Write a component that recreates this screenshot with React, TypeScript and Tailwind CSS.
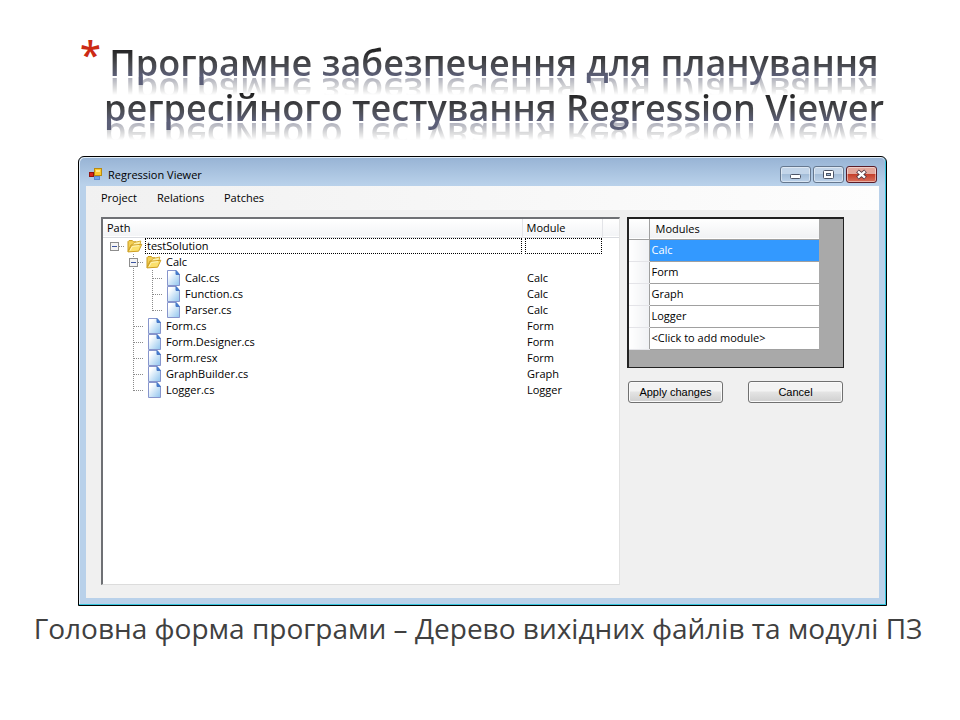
import type { ReactNode } from "react";

type Node = { name: string; module?: string; level: number; kind: "folder" | "file"; last?: boolean };

const nodes: Node[] = [
  { name: "testSolution", level: 0, kind: "folder", last: true },
  { name: "Calc", level: 1, kind: "folder" },
  { name: "Calc.cs", module: "Calc", level: 2, kind: "file" },
  { name: "Function.cs", module: "Calc", level: 2, kind: "file" },
  { name: "Parser.cs", module: "Calc", level: 2, kind: "file", last: true },
  { name: "Form.cs", module: "Form", level: 1, kind: "file" },
  { name: "Form.Designer.cs", module: "Form", level: 1, kind: "file" },
  { name: "Form.resx", module: "Form", level: 1, kind: "file" },
  { name: "GraphBuilder.cs", module: "Graph", level: 1, kind: "file" },
  { name: "Logger.cs", module: "Logger", level: 1, kind: "file", last: true },
];

const modules = ["Calc", "Form", "Graph", "Logger", "<Click to add module>"];

function Guide({ kind }: { kind: "blank" | "line" | "tee" | "end" | "root" | "box" }) {
  const dots = { stroke: "#8a8a8a", strokeDasharray: "1 1" };
  return (
    <svg width="19" height="16" className="shrink-0" shapeRendering="crispEdges" aria-hidden="true">
      {(kind === "line" || kind === "tee" || kind === "box") && <path d="M9.5 0V16" {...dots} />}
      {kind === "end" && <path d="M9.5 0V9" {...dots} />}
      {kind !== "blank" && kind !== "line" && <path d="M10 8.5H19" {...dots} />}
      {(kind === "root" || kind === "box") && (
        <g>
          <rect x="5.5" y="4.5" width="8" height="8" rx="1" fill="#f4f4f4" stroke="#8d8d8d" />
          <path d="M7 8.5H12" stroke="#3c55a0" />
        </g>
      )}
    </svg>
  );
}

function FolderIcon() {
  return (
    <svg width="16" height="16" viewBox="0 0 16 16" className="ml-[3px] shrink-0" aria-hidden="true">
      <path d="M1 13.5V3.6L2 2.6H5.4L6.6 3.8H9V7H4Z" fill="#f3cf55" stroke="#c99a1c" />
      <path d="M5.5 6.5L7 4.5L13.8 3L12.8 7.5" fill="#fdf0a8" stroke="#d8ae35" />
      <path d="M1 13.9L4.6 7.3L14.8 6.3L11.6 13.2Z" fill="#fbe06c" stroke="#cf9f22" />
      <path d="M3 12.6L5.3 8.4L12 7.7" fill="none" stroke="#fff6c0" />
    </svg>
  );
}

function FileIcon() {
  return (
    <svg width="14" height="16" viewBox="0 0 14 16" className="ml-[5px] shrink-0" aria-hidden="true">
      <defs>
        <linearGradient id="sheet" x1="0" y1="0" x2="1" y2="1">
          <stop offset="0.2" stopColor="#ffffff" />
          <stop offset="1" stopColor="#8fc4ee" />
        </linearGradient>
      </defs>
      <path d="M0.5 0.5H9L12.5 4.5V15.5H0.5Z" fill="url(#sheet)" stroke="#8795cc" />
      <path d="M9 0.5V4.5H12.5Z" fill="#3f7fd6" stroke="#4b78c4" />
    </svg>
  );
}

function FormIcon() {
  return (
    <svg width="14" height="14" viewBox="0 0 14 14" className="mt-1.5 shrink-0" aria-hidden="true">
      <rect x="5.5" y="0.5" width="7" height="7" fill="#fbc92f" stroke="#b88a12" />
      <path d="M7 2H11V4H7Z" fill="#ffe98a" />
      <rect x="0.5" y="4.5" width="4" height="4" fill="#d8241c" stroke="#8f1410" />
      <rect x="5.5" y="8.5" width="5" height="3" fill="#6ea4ec" stroke="#5a88d0" />
    </svg>
  );
}

function CaptionButton({ label, danger, children }: { label: string; danger?: boolean; children: ReactNode }) {
  return (
    <button
      type="button"
      aria-label={label}
      className={
        "flex h-[17px] w-[31px] items-center justify-center rounded-[3px] border shadow-[inset_0_0_0_1px_rgba(255,255,255,0.45)] " +
        (danger
          ? "border-[#5a1c28] bg-linear-to-b from-[#e3a79c] from-45% via-[#c5402c] via-50% to-[#d8705c]"
          : "border-[#66788f] bg-linear-to-b from-[#c3d5e9] from-45% via-[#a4bdd8] via-50% to-[#bcd2ea]")
      }
    >
      <svg width="17" height="13" viewBox="0 0 17 13" aria-hidden="true">
        {children}
      </svg>
    </button>
  );
}

function guidesFor(node: Node) {
  if (node.level === 0) return <Guide kind="root" />;
  if (node.level === 1)
    return (
      <>
        <Guide kind="blank" />
        <Guide kind={node.kind === "folder" ? "box" : node.last ? "end" : "tee"} />
      </>
    );
  return (
    <>
      <Guide kind="blank" />
      <Guide kind="line" />
      <Guide kind={node.last ? "end" : "tee"} />
    </>
  );
}

function SourceTree() {
  return (
    <div className="min-h-[368px] min-w-0 flex-1 border-t-2 border-r border-b border-l-2 border-t-[#6e7074] border-r-[#e2e2e2] border-b-[#dcdcdc] border-l-[#6e7074] bg-white">
      <table className="w-full table-fixed border-collapse text-left text-[11px] leading-4 text-black">
        <colgroup>
          <col />
          <col className="w-[80px]" />
          <col className="w-[17px]" />
        </colgroup>
        <thead>
          <tr className="h-[18px] border-b border-[#d9dbe0] bg-linear-to-b from-white to-[#f3f4f6]">
            <th className="border-r border-[#e3e4e8] px-1 pt-px font-normal">Path</th>
            <th className="border-r border-[#e3e4e8] px-1 pt-px font-normal">Module</th>
            <th></th>
          </tr>
        </thead>
        <tbody>
          {nodes.map((node) => (
            <tr key={node.name} className="h-4">
              <td className="p-0 pl-0.5">
                <div className="flex h-4 items-center">
                  {guidesFor(node)}
                  <span className="flex w-[21px] shrink-0">{node.kind === "folder" ? <FolderIcon /> : <FileIcon />}</span>
                  <span
                    className={
                      "h-4 flex-1 px-px leading-[14px] " +
                      (node.level === 0 ? "border border-dotted border-black" : "border border-transparent")
                    }
                  >
                    {node.name}
                  </span>
                </div>
              </td>
              <td className="p-0 pl-[3px]">
                <div
                  className={
                    "h-4 pl-px leading-[14px] " +
                    (node.level === 0 ? "border border-dotted border-black" : "border border-transparent")
                  }
                >
                  {node.module}
                </div>
              </td>
              <td></td>
            </tr>
          ))}
        </tbody>
      </table>
    </div>
  );
}

function ModuleGrid() {
  return (
    <div className="h-[151px] border border-t-2 border-l-2 border-[#222] bg-[#a9a9a9]">
      <table className="w-[190px] table-fixed border-collapse text-left text-[11px] leading-4 text-black">
        <colgroup>
          <col className="w-5" />
          <col />
        </colgroup>
        <thead>
          <tr className="h-5 border-b border-[#a0a0a0] bg-linear-to-b from-white to-[#f1f2f4]">
            <th className="border-r border-[#a0a0a0]"></th>
            <th className="px-1.5 font-normal">Modules</th>
          </tr>
        </thead>
        <tbody>
          {modules.map((name, i) => (
            <tr key={name} className={"h-[22px] " + (i === 0 ? "text-white" : "")}>
              <td className="border-r border-b border-r-[#a0a0a0] border-b-[#e4e4e8] bg-linear-to-r from-white to-[#f0f1f4] p-0"></td>
              <td className={"border-b border-[#a0a0a0] p-0 pl-0.5 " + (i === 0 ? "bg-[#3399ff]" : "bg-white")}>{name}</td>
            </tr>
          ))}
        </tbody>
      </table>
    </div>
  );
}

const pushButton =
  "h-[22px] w-[95px] rounded-[3px] border border-[#707070] bg-linear-to-b from-[#f3f3f3] from-45% via-[#e4e4e4] via-50% to-[#cfcfcf] font-['Liberation_Sans',Arial,sans-serif] text-[11px] leading-4 text-black shadow-[inset_0_0_0_1px_#fafafa]";

const headingLine =
  "mx-auto block h-[45px] w-fit bg-linear-to-b from-[#222] from-20% via-[#4a4b50] via-55% to-[#5c5f78] to-80% bg-clip-text whitespace-nowrap text-transparent [-webkit-box-reflect:below_-16px_linear-gradient(transparent_42%,rgba(0,0,0,0.5)_82%,transparent_83%)]";

export default function App() {
  return (
    <main className="min-h-screen bg-white pt-10 font-['Open_Sans','Noto_Sans',sans-serif]">
      <header className="flex justify-center pl-7">
        <h1 className="relative text-[36px] leading-[45px] font-semibold">
          <span className="absolute -top-2 -left-6 text-[38px] leading-[45px] font-semibold text-[#cc2a14]" aria-hidden="true">
            *
          </span>
          <span className={headingLine}>Програмне забезпечення для планування</span>
          <span className={headingLine}>регресійного тестування Regression Viewer</span>
        </h1>
      </header>

      <section
        aria-label="Regression Viewer"
        className="mt-[26px] mr-[73px] ml-[78px] rounded-t-md border border-black bg-[#b9d1ea] shadow-[inset_-1px_-1px_0_#35c4dc,inset_1px_1px_0_#e3eef8]"
      >
        <div className="m-px flex h-[27px] items-center gap-1 rounded-t-[5px] bg-linear-to-b from-[#98b4d5] to-[#b9d1ea] pr-2 pl-[9px]">
          <FormIcon />
          <h2 className="flex-1 pt-1.5 pl-px text-[11px] leading-4 text-black">Regression Viewer</h2>
          <div className="flex gap-0.5 pt-1.5">
            <CaptionButton label="Minimize">
              <rect x="3.5" y="6.5" width="10" height="4" rx="1" fill="#fff" stroke="#4d5566" />
            </CaptionButton>
            <CaptionButton label="Maximize">
              <rect x="3.5" y="2.5" width="10" height="8" rx="1" fill="#fff" stroke="#4d5566" />
              <rect x="6.5" y="5.5" width="4" height="2" fill="#a4bdd8" stroke="#4d5566" />
            </CaptionButton>
            <CaptionButton label="Close" danger>
              <path d="M4.5 3L12.5 10M12.5 3L4.5 10" stroke="#4e3440" strokeWidth="4" />
              <path d="M5 3.4L12 9.6M12 3.4L5 9.6" stroke="#fff" strokeWidth="2.4" />
            </CaptionButton>
          </div>
        </div>

        <div className="mx-[7px] mb-[7px] bg-[#f0f0f0]">
          <nav className="flex h-6 items-center bg-linear-to-r from-[#f1f1f1] to-[#fdfdfd] pl-[15px] text-[11px] leading-4 text-black">
            <button type="button" className="w-14 text-left">Project</button>
            <button type="button" className="w-[67px] text-left">Relations</button>
            <button type="button" className="text-left">Patches</button>
          </nav>
          <div className="flex items-start gap-[7px] pt-[7px] pr-[35px] pb-[13px] pl-[15px]">
            <SourceTree />
            <div className="w-[217px] shrink-0">
              <ModuleGrid />
              <div className="mt-[13px] flex justify-between px-px">
                <button type="button" className={pushButton}>Apply changes</button>
                <button type="button" className={pushButton}>Cancel</button>
              </div>
            </div>
          </div>
        </div>
      </section>

      <p className="mt-0.5 pr-1 text-center text-[28px] leading-10 text-[#404040]">
        Головна форма програми – Дерево вихідних файлів та модулі ПЗ
      </p>
    </main>
  );
}
